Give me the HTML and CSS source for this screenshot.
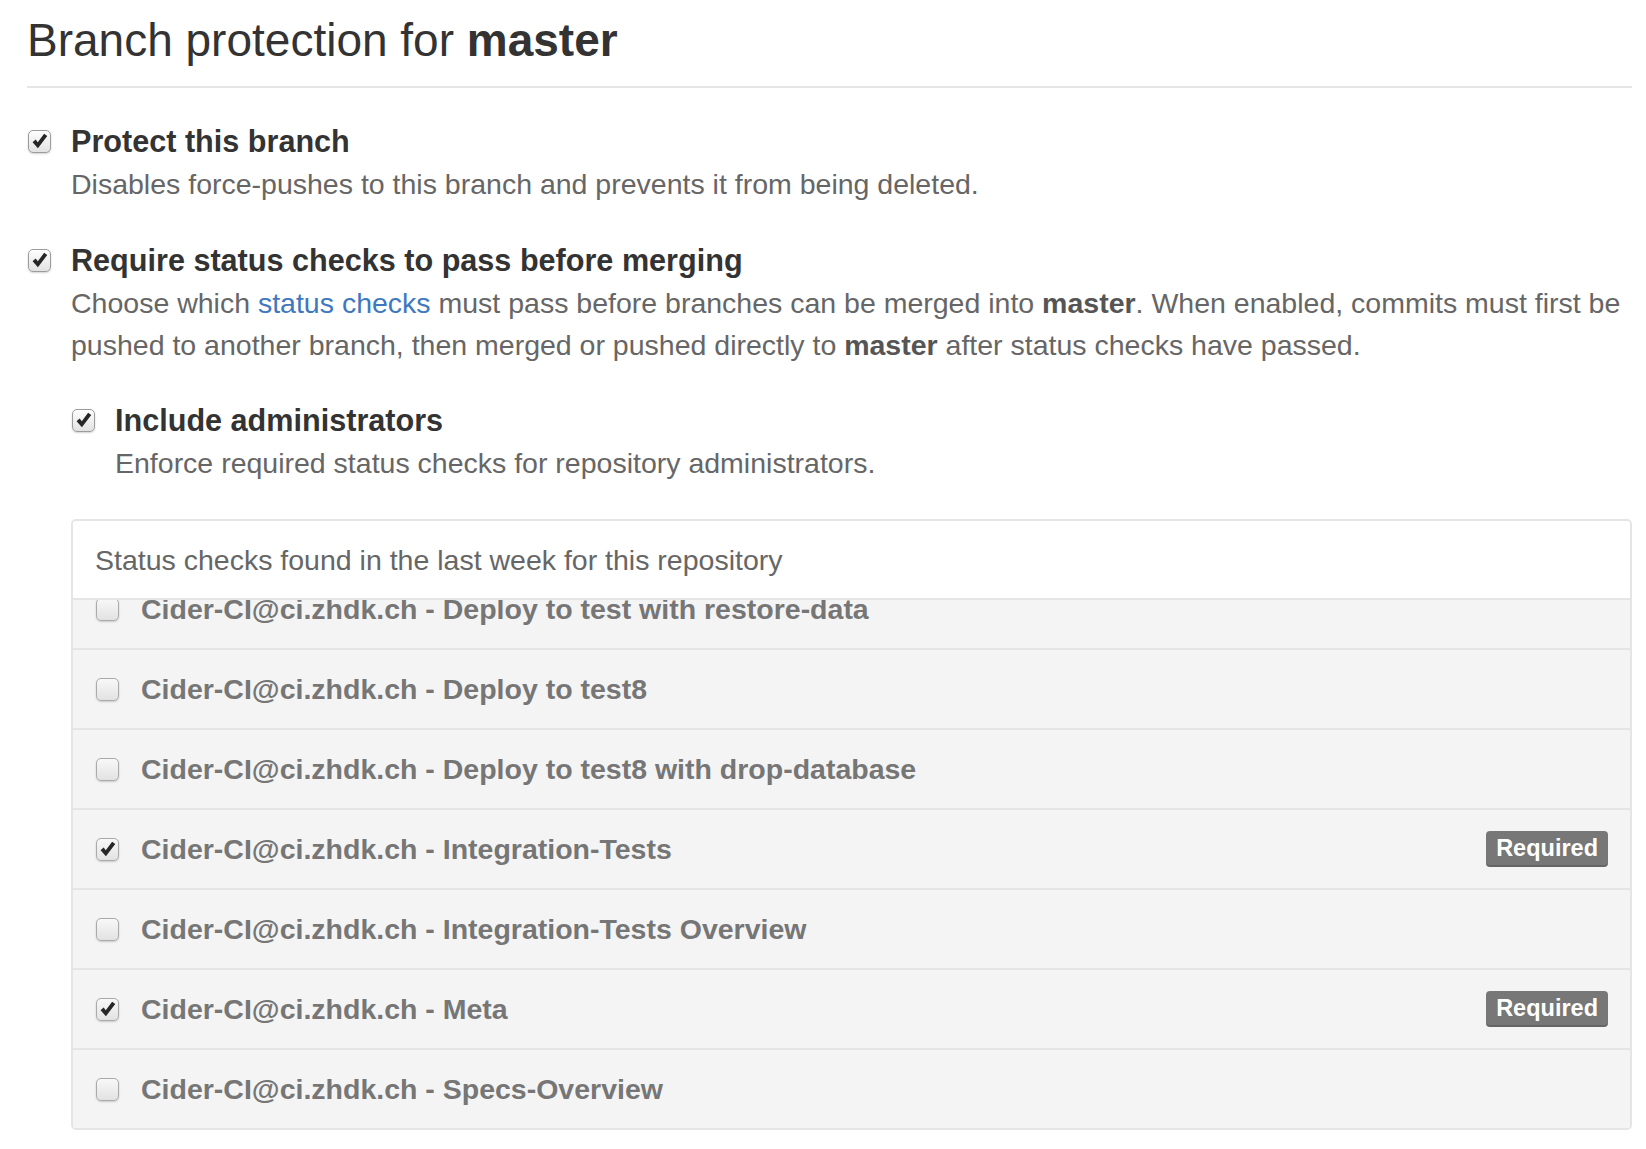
FILE: index.html
```html
<!DOCTYPE html>
<html lang="en">

<head>
    <meta charset="UTF-8" />
    <meta name="viewport" content="width=device-width, initial-scale=1.0" />
    <title>Branch protection for master</title>
    <link rel="stylesheet" href="styles.css">
</head>

<body>
    <div class="settings">
        <h2 class="subhead">Branch protection for <strong>master</strong></h2>

        <div class="option first">
            <span class="cb checked"><svg viewBox="0 0 20 20"><path d="M3.4 10.6l2.9-2.6 2.1 2.8 6-8.1 3 2.1-8.9 11.7z"/></svg></span>
            <div class="option-body">
                <div class="option-title">Protect this branch</div>
                <p class="note">Disables force-pushes to this branch and prevents it from being deleted.</p>
            </div>
        </div>

        <div class="option">
            <span class="cb checked"><svg viewBox="0 0 20 20"><path d="M3.4 10.6l2.9-2.6 2.1 2.8 6-8.1 3 2.1-8.9 11.7z"/></svg></span>
            <div class="option-body">
                <div class="option-title">Require status checks to pass before merging</div>
                <p class="note">Choose which <a href="#">status checks</a> must pass before branches can be merged into <strong>master</strong>. When enabled, commits must first be pushed to another branch, then merged or pushed directly to <strong>master</strong> after status checks have passed.</p>

                <div class="option nested">
                    <span class="cb checked"><svg viewBox="0 0 20 20"><path d="M3.4 10.6l2.9-2.6 2.1 2.8 6-8.1 3 2.1-8.9 11.7z"/></svg></span>
                    <div class="option-body">
                        <div class="option-title">Include administrators</div>
                        <p class="note">Enforce required status checks for repository administrators.</p>
                    </div>
                </div>

                <div class="checks">
                    <div class="checks-header">Status checks found in the last week for this repository</div>
                    <ul class="checks-list" id="checksList">
                        <li class="check-item">
                            <span class="cb"></span>
                            <span class="check-name">Cider-CI@ci.zhdk.ch - Deploy to test with restore-data</span>
                        </li>
                        <li class="check-item">
                            <span class="cb"></span>
                            <span class="check-name">Cider-CI@ci.zhdk.ch - Deploy to test8</span>
                        </li>
                        <li class="check-item">
                            <span class="cb"></span>
                            <span class="check-name">Cider-CI@ci.zhdk.ch - Deploy to test8 with drop-database</span>
                        </li>
                        <li class="check-item">
                            <span class="cb checked"><svg viewBox="0 0 20 20"><path d="M3.4 10.6l2.9-2.6 2.1 2.8 6-8.1 3 2.1-8.9 11.7z"/></svg></span>
                            <span class="check-name">Cider-CI@ci.zhdk.ch - Integration-Tests</span>
                            <span class="label-required">Required</span>
                        </li>
                        <li class="check-item">
                            <span class="cb"></span>
                            <span class="check-name">Cider-CI@ci.zhdk.ch - Integration-Tests Overview</span>
                        </li>
                        <li class="check-item">
                            <span class="cb checked"><svg viewBox="0 0 20 20"><path d="M3.4 10.6l2.9-2.6 2.1 2.8 6-8.1 3 2.1-8.9 11.7z"/></svg></span>
                            <span class="check-name">Cider-CI@ci.zhdk.ch - Meta</span>
                            <span class="label-required">Required</span>
                        </li>
                        <li class="check-item">
                            <span class="cb"></span>
                            <span class="check-name">Cider-CI@ci.zhdk.ch - Specs-Overview</span>
                        </li>
                    </ul>
                </div>
            </div>
        </div>
    </div>

    <script>
        // list is scrolled a little, like in the settings page
        let checksList = document.querySelector("#checksList");
        checksList.scrollTop = 30;
    </script>
</body>

</html>
```

FILE: styles.css
```css
* {
    margin: 0;
    padding: 0;
    box-sizing: border-box;
}

body {
    font-family: "Liberation Sans", Arial, Helvetica, sans-serif;
    font-size: 28.5px;
    line-height: 42px;
    color: #333;
    background: #fff;
}

.settings {
    padding: 0 14px 0 27px;
}

.subhead {
    padding-top: 12px;
    padding-bottom: 18px;
    font-size: 46px;
    line-height: 56px;
    font-weight: normal;
    color: #333;
    border-bottom: 2px solid #e5e5e5;
}

.option {
    display: grid;
    grid-template-columns: 44px 1fr;
    margin-top: 33px;
}

.option.first {
    margin-top: 31px;
}

.option.nested {
    margin-top: 32px;
}

.option > .cb {
    margin-top: 11px;
    margin-left: 1px;
}

.option-title {
    font-size: 30.6px;
    line-height: 44px;
    font-weight: bold;
    color: #333;
}

.note {
    color: #666;
}

.note a {
    color: #4078c0;
    text-decoration: none;
}

.note strong {
    color: #555;
}

/* checkbox */
.cb {
    display: inline-block;
    width: 23px;
    height: 23px;
    border: 1px solid #9c9c9c;
    border-radius: 5px;
    background: linear-gradient(#fefefe, #e2e2e2);
    box-shadow: 0 1px 2px rgba(0, 0, 0, 0.18);
    flex-shrink: 0;
}

.cb svg {
    display: block;
    width: 21px;
    height: 21px;
    fill: #262626;
}

/* status checks box */
.checks {
    margin-top: 35px;
    border: 2px solid #e5e5e5;
    border-radius: 5px;
    overflow: hidden;
}

.checks-header {
    padding: 18px 22px 17px;
    color: #666;
    background: #fff;
    border-bottom: 2px solid #e5e5e5;
}

.checks-list {
    list-style: none;
    height: 528px;
    overflow-y: auto;
    scrollbar-width: none;
    background: #f4f4f4;
}

.checks-list::-webkit-scrollbar {
    display: none;
}

.check-item {
    display: flex;
    align-items: center;
    gap: 22px;
    height: 80px;
    padding: 0 22px 0 23px;
    border-bottom: 2px solid #e5e5e5;
}

.check-item:last-child {
    height: 78px;
    border-bottom: none;
}

.check-item .cb {
    border-color: #aaa;
    background: linear-gradient(#f8f8f8, #e2e2e2);
}

.check-name {
    font-weight: bold;
    color: #767676;
}

.label-required {
    margin-left: auto;
    padding: 0 10px;
    height: 36px;
    line-height: 35px;
    font-size: 23.5px;
    font-weight: bold;
    color: #fff;
    background: #777;
    border-radius: 4px;
    box-shadow: inset 0 -2px 0 rgba(0, 0, 0, 0.15);
}
```
